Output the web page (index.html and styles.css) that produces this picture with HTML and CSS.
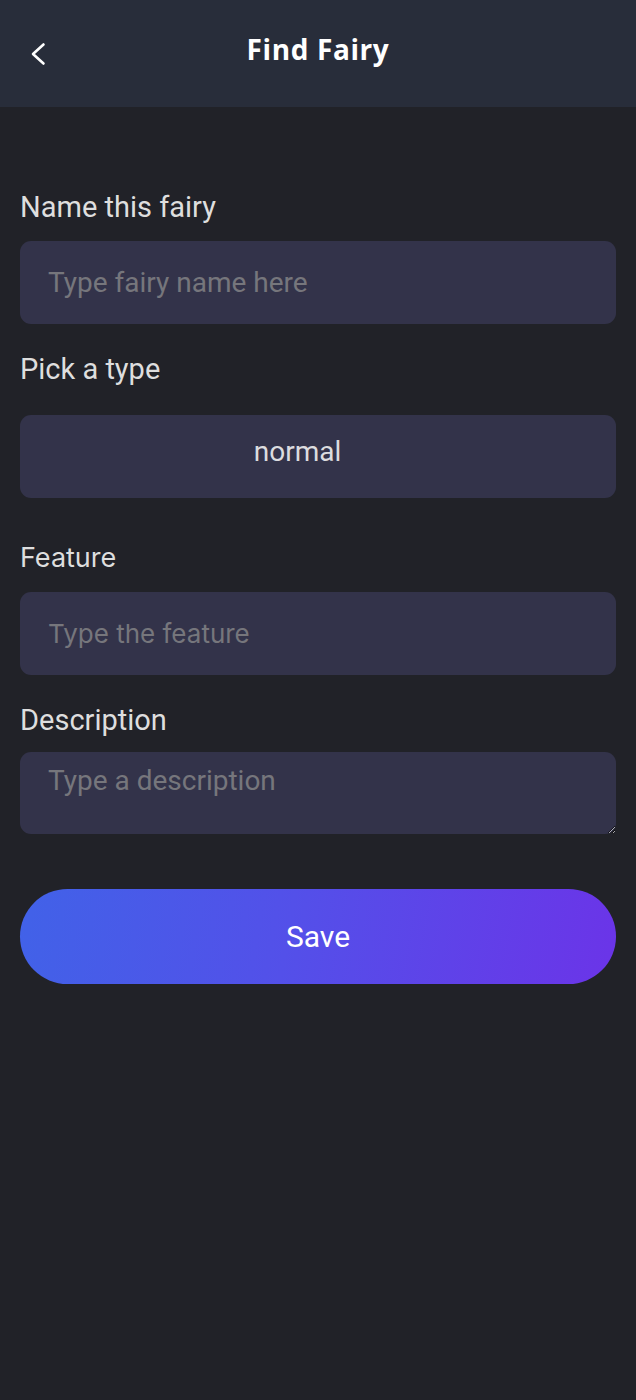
FILE: index.html
```html
<!DOCTYPE html>
<html lang="en">
<head>
<meta charset="utf-8">
<title>Find Fairy</title>
<link rel="stylesheet" href="styles.css">
</head>
<body>
<header class="topbar">
  <button class="back" aria-label="Back">
    <svg width="24" height="24" viewBox="0 0 24 24" fill="none" stroke="#ffffff" stroke-width="2.6" stroke-linecap="round" stroke-linejoin="round"><polyline points="17.5,2.5 7,12 17.5,21.5"/></svg>
  </button>
  <h1 class="title">Find Fairy</h1>
  <span class="spacer"></span>
</header>
<main class="form">
  <div class="field">
    <label class="label" for="name">Name this fairy</label>
    <input class="input" id="name" type="text" placeholder="Type fairy name here">
  </div>
  <div class="field field--select">
    <label class="label" for="type">Pick a type</label>
    <select class="input select" id="type">
      <option>normal</option>
    </select>
  </div>
  <div class="field field--alt">
    <label class="label" for="feature">Feature</label>
    <input class="input" id="feature" type="text" placeholder="Type the feature">
  </div>
  <div class="field field--area">
    <label class="label" for="desc">Description</label>
    <textarea class="input textarea" id="desc" placeholder="Type a description"></textarea>
  </div>
  <button class="save">Save</button>
</main>
</body>
</html>
```
FILE: styles.css
```css
* { box-sizing: border-box; }
html, body { margin: 0; padding: 0; }
body {
  background: #212228;
  font-family: Roboto, "Liberation Sans", sans-serif;
  color: #dcdcdc;
  min-height: 1400px;
}
.topbar {
  height: 107px;
  background: #282d3a;
  display: grid;
  grid-template-columns: 1fr auto 1fr;
  align-items: start;
  padding: 0 20px;
}
.back {
  justify-self: start;
  margin-top: 42px;
  margin-left: 6px;
  width: 24px;
  height: 24px;
  padding: 0;
  border: 0;
  background: none;
  display: block;
  cursor: pointer;
}
.back svg { display: block; }
.title {
  margin: 30px 0 0;
  font-family: "Open Sans", "DejaVu Sans", sans-serif;
  font-weight: 700;
  font-size: 28px;
  line-height: 38px;
  letter-spacing: 0.6px;
  color: #ffffff;
}
.form {
  display: flex;
  flex-direction: column;
  padding: 84px 20px 0;
}
.field {
  display: flex;
  flex-direction: column;
  margin-bottom: 29px;
}
.label {
  font-size: 29px;
  line-height: 33px;
  color: #dedede;
  margin-bottom: 17px;
}
.input {
  height: 83px;
  border: 0;
  outline: none;
  border-radius: 11px;
  background: #33334a;
  padding: 0 28px;
  font-family: Roboto, "Liberation Sans", sans-serif;
  font-size: 28px;
  color: #dcdcdc;
}
.input::placeholder { color: #76767c; }
.field--select { margin-bottom: 43px; }
.field--select .label { margin-bottom: 29px; }
.select {
  appearance: none;
  -webkit-appearance: none;
  text-align: center;
  text-align-last: center;
  padding: 0 69px 10px 28px;
  color: #dcdcdf;
}
.field--alt .label,
.field--alt .input {
  font-family: Inter, "Noto Sans", sans-serif;
  font-size: 26px;
}
.field--alt .label { font-size: 27px; margin-bottom: 18px; }
.field--area { margin-bottom: 55px; }
.field--area .label { margin-bottom: 15px; }
.textarea {
  height: 82px;
  padding: 12px 28px;
  line-height: 33px;
  resize: both;
}
.save {
  height: 95px;
  border: 0;
  border-radius: 48px;
  background: linear-gradient(100deg, #4162e8 0%, #5350e9 45%, #6b34e8 100%);
  color: #ffffff;
  font-family: Roboto, "Liberation Sans", sans-serif;
  font-size: 30px;
  font-weight: 400;
  cursor: pointer;
}
```
